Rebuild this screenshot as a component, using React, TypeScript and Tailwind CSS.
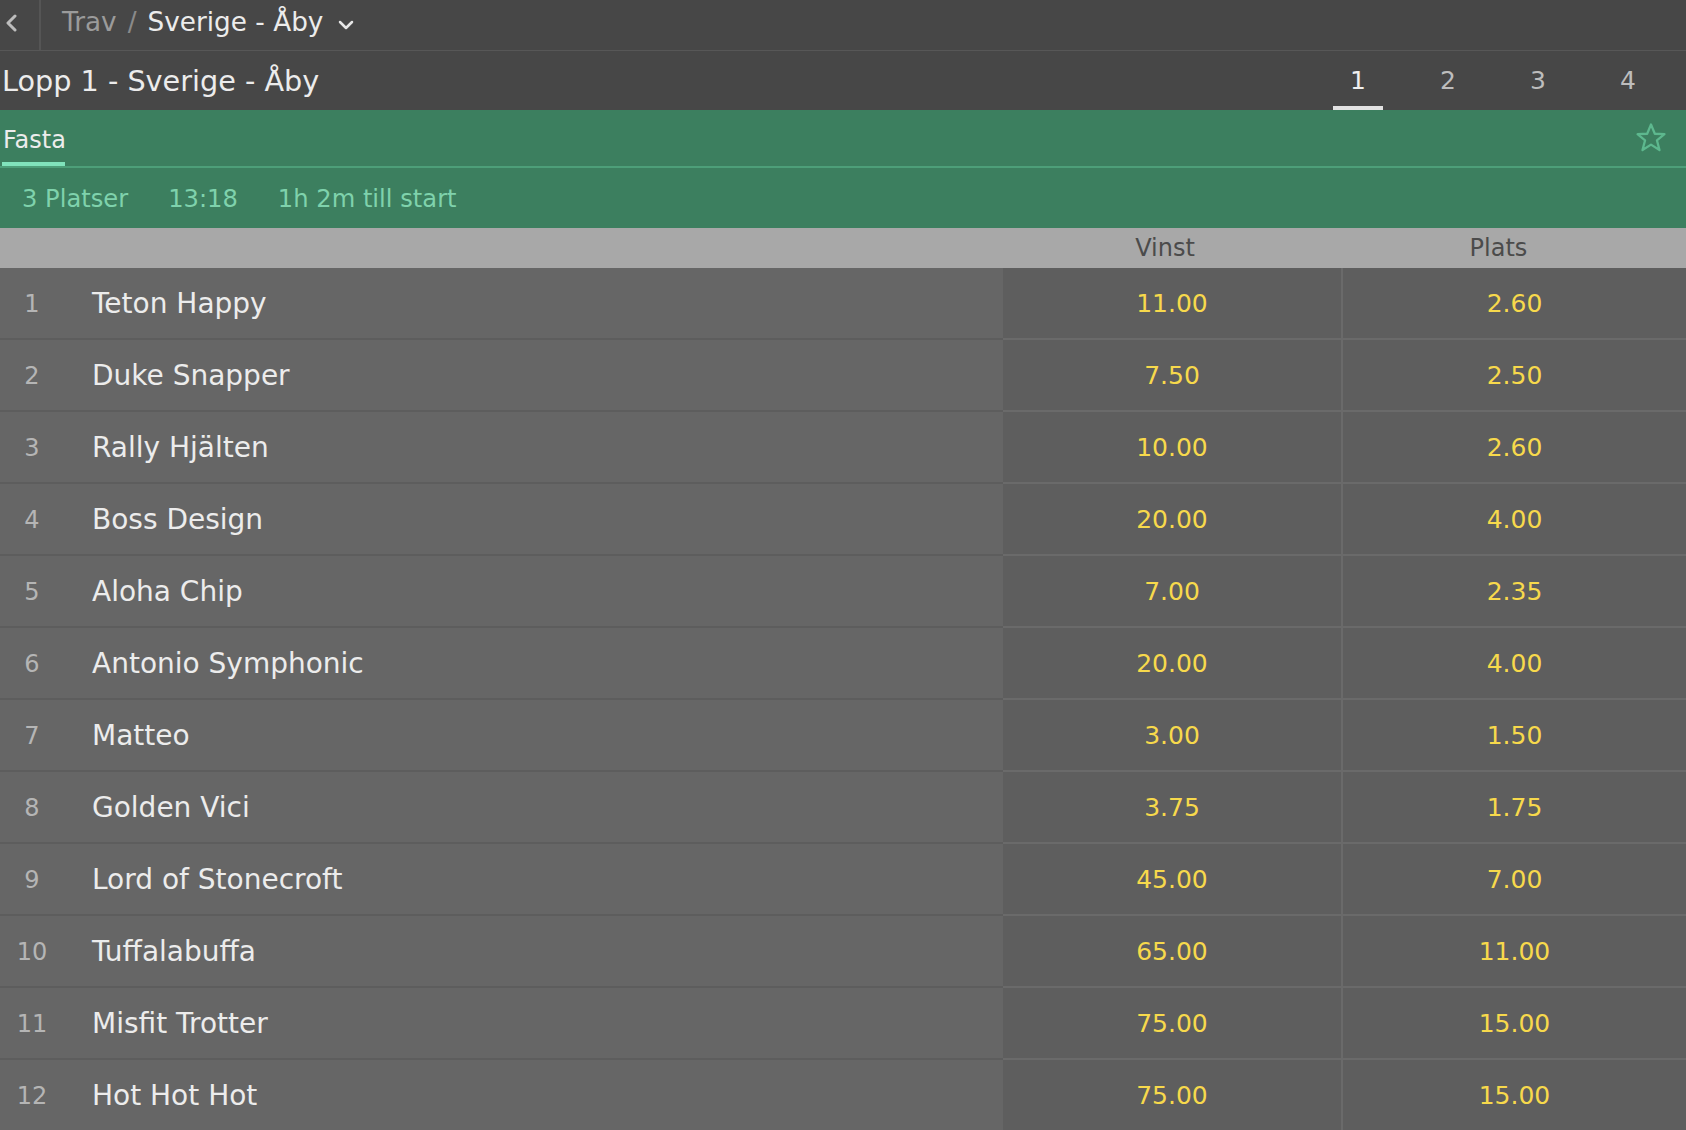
import {useState} from "react";

type Runner = { nr: number; name: string; vinst: string; plats: string };

const runners: Runner[] = [
    {nr: 1, name: "Teton Happy", vinst: "11.00", plats: "2.60"},
    {nr: 2, name: "Duke Snapper", vinst: "7.50", plats: "2.50"},
    {nr: 3, name: "Rally Hjälten", vinst: "10.00", plats: "2.60"},
    {nr: 4, name: "Boss Design", vinst: "20.00", plats: "4.00"},
    {nr: 5, name: "Aloha Chip", vinst: "7.00", plats: "2.35"},
    {nr: 6, name: "Antonio Symphonic", vinst: "20.00", plats: "4.00"},
    {nr: 7, name: "Matteo", vinst: "3.00", plats: "1.50"},
    {nr: 8, name: "Golden Vici", vinst: "3.75", plats: "1.75"},
    {nr: 9, name: "Lord of Stonecroft", vinst: "45.00", plats: "7.00"},
    {nr: 10, name: "Tuffalabuffa", vinst: "65.00", plats: "11.00"},
    {nr: 11, name: "Misfit Trotter", vinst: "75.00", plats: "15.00"},
    {nr: 12, name: "Hot Hot Hot", vinst: "75.00", plats: "15.00"},
];

const races = [1, 2, 3, 4];

export default function App() {
    const [race, setRace] = useState(1);

    return (
        <div className="min-h-[1130px] w-full bg-[#666666] font-['DejaVu_Sans',sans-serif] overflow-hidden">
            {/* breadcrumb bar */}
            <div className="h-[51px] bg-[#474747] border-b border-[#575757] flex items-stretch">
                <button className="w-[41px] border-r-2 border-[#555555] flex items-center pl-[5px] pb-[4px]">
                    <svg width="13" height="18" viewBox="0 0 13 18" fill="none">
                        <polyline points="10,2 3,9 10,16" stroke="#bdbdbd" strokeWidth="3" strokeLinecap="round" strokeLinejoin="round"/>
                    </svg>
                </button>
                <div className="flex items-center pl-[21px] text-[26.3px] pb-[5px]">
                    <span className="text-[#9b9b9b]">Trav</span>
                    <span className="text-[#8a8a8a] mx-[11px]">/</span>
                    <span className="text-[#ececec]">Sverige - Åby</span>
                    <svg className="ml-[15px] mt-[4px]" width="16" height="10" viewBox="0 0 16 10" fill="none">
                        <polyline points="2,2 8,8 14,2" stroke="#e6e6e6" strokeWidth="2.5" strokeLinecap="round" strokeLinejoin="round"/>
                    </svg>
                </div>
            </div>

            {/* race header with tabs */}
            <div className="h-[59px] bg-[#474747] flex items-stretch justify-between pr-[13px]">
                <div className="flex items-center pl-[2px] text-[28.7px] text-[#ececec] pt-[3px]">Lopp 1 - Sverige - Åby</div>
                <div className="flex items-stretch">
                    {races.map((r) => (
                        <button
                            key={r}
                            onClick={() => setRace(r)}
                            className="w-[90px] relative flex items-center justify-center text-[25px] pt-[1px]"
                        >
                            <span className={r === race ? "text-[#f0f0f0]" : "text-[#bdbdbd]"}>{r}</span>
                            {r === race && <span className="absolute bottom-0 left-[20px] w-[50px] h-[4px] bg-[#e2e2e2]"/>}
                        </button>
                    ))}
                </div>
            </div>

            {/* market header */}
            <div className="bg-[#3c7f5f]">
                <div className="h-[58px] flex items-stretch justify-between border-b-2 border-[#4d9f79]">
                    <div className="relative ml-[2px] flex items-center px-[1px] text-[24px] text-[#ececec] pt-[3px]">
                        Fasta
                        <span className="absolute bottom-0 left-0 w-[63px] h-[4px] bg-[#80e3bb]"/>
                    </div>
                    <div className="flex items-center pr-[18px] pb-[1px]">
                        <svg width="34" height="34" viewBox="0 0 24 24" fill="none">
                            <polygon
                                points="12,2.5 14.7,9 21.5,9.3 16.2,13.7 18,20.5 12,16.7 6,20.5 7.8,13.7 2.5,9.3 9.3,9"
                                stroke="#5db88e" strokeWidth="1.6" strokeLinejoin="round"/>
                        </svg>
                    </div>
                </div>
                <div className="h-[60px] flex items-center pl-[22px] text-[24.2px] text-[#7fd2ac] gap-[40px] pt-[2px]">
                    <span>3 Platser</span>
                    <span>13:18</span>
                    <span>1h 2m till start</span>
                </div>
            </div>

            {/* column header */}
            <div className="h-[40px] bg-[#a8a8a8] grid grid-cols-[1003px_324px_343px] text-[24px] text-[#4b4b4b]">
                <div/>
                <div className="flex items-center justify-center">Vinst</div>
                <div className="flex items-center justify-center">Plats</div>
            </div>

            {/* runners */}
            <div>
                {runners.map((r) => (
                    <div key={r.nr} className="h-[72px] grid grid-cols-[1003px_340px_1fr] border-b-2 border-[#6a6a6a]">
                        <div className="flex items-center bg-[#666666] border-b-2 border-[#5d5d5d] -mb-[2px] pt-[2px]">
                            <span className="w-[64px] text-center text-[24px] text-[#b5b5b5]">{r.nr}</span>
                            <span className="pl-[28px] text-[28px] text-[#ececec]">{r.name}</span>
                        </div>
                        <button className="flex items-center justify-center bg-[#5e5e5e] border-r-2 border-[#6a6a6a] text-[25px] text-[#f7d94c] pt-[1px]">
                            {r.vinst}
                        </button>
                        <button className="flex items-center justify-center bg-[#5e5e5e] text-[25px] text-[#f7d94c] pt-[1px]">
                            {r.plats}
                        </button>
                    </div>
                ))}
            </div>
        </div>
    );
}
